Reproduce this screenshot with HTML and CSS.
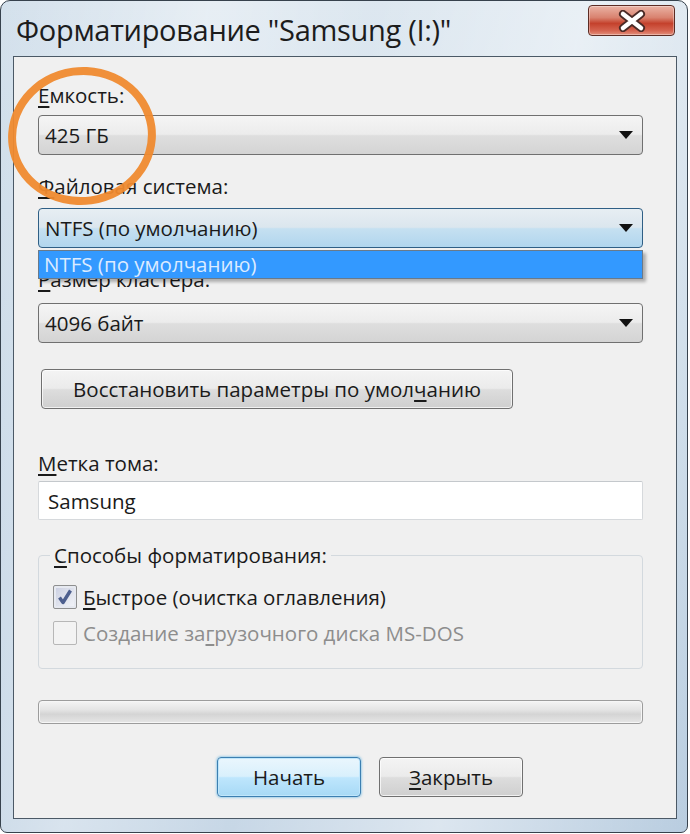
FILE: index.html
```html
<!DOCTYPE html>
<html lang="ru">
<head>
<meta charset="utf-8">
<title>Форматирование</title>
<link rel="stylesheet" href="styles.css">
</head>
<body>
<div class="window">
  <div class="titlebar">
    <div class="title">Форматирование "Samsung (I:)"</div>
    <div class="close">
      <svg width="32" height="22" viewBox="0 0 32 22">
        <path d="M7 4 L25 18 M25 4 L7 18" stroke="#4a2a26" stroke-width="8" stroke-linecap="round"/>
        <path d="M7 4 L25 18 M25 4 L7 18" stroke="#ffffff" stroke-width="4.5" stroke-linecap="round"/>
      </svg>
    </div>
  </div>
  <div class="client">
    <div class="label l1"><u>Е</u>мкость:</div>
    <div class="combo c1"><span>425 ГБ</span><i class="arrow"></i></div>

    <div class="label l2"><u>Ф</u>айловая система:</div>
    <div class="combo-wrap c2">
      <div class="combo focused"><span>NTFS (по умолчанию)</span><i class="arrow"></i></div>
      <div class="droplist"><div class="item">NTFS (по умолчанию)</div></div>
    </div>

    <div class="label l3"><u>Р</u>азмер кластера:</div>
    <div class="combo c3"><span>4096 байт</span><i class="arrow"></i></div>

    <div class="btn restore">Восстановить параметры по умол<u>ч</u>анию</div>

    <div class="label l4"><u>М</u>етка тома:</div>
    <div class="textbox">Samsung</div>

    <fieldset class="group">
      <legend><u>С</u>пособы форматирования:</legend>
      <div class="check-row">
        <span class="checkbox checked">
          <svg width="18" height="18" viewBox="0 0 18 18"><path d="M3.5 9.5 L7 14.5 L14.5 2.5" fill="none" stroke="#4d5f8e" stroke-width="3.4" stroke-linejoin="round"/></svg>
        </span>
        <span><u>Б</u>ыстрое (очистка оглавления)</span>
      </div>
      <div class="check-row disabled">
        <span class="checkbox"></span>
        <span>Создание за<u>г</u>рузочного диска MS-DOS</span>
      </div>
    </fieldset>

    <div class="progress"></div>

    <div class="actions">
      <div class="btn default">Начать</div>
      <div class="btn"><u>З</u>акрыть</div>
    </div>
  </div>
  <div class="mark"></div>
</div>
</body>
</html>
```
FILE: styles.css
```css
* { box-sizing: border-box; }
html, body { margin: 0; padding: 0; background: #ffffff; }
body {
  font-family: "Open Sans", "Noto Sans", sans-serif;
  font-size: 20.5px;
  color: #1a1a1a;
}
u { text-decoration: underline; text-underline-offset: 3px; text-decoration-thickness: 2px; }

.window {
  position: relative;
  width: 688px;
  height: 833px;
  border: 1px solid #37424d;
  border-radius: 10px 10px 7px 7px;
  padding: 55px 10px 13px 12px;
  background:
    linear-gradient(100deg, rgba(255,255,255,0) 0%, rgba(255,255,255,0.45) 25%, rgba(255,255,255,0.2) 45%, rgba(255,255,255,0.5) 70%, rgba(255,255,255,0) 100%),
    linear-gradient(180deg, #d4e1ec 0%, #c6d7e6 50%, #b9cde0 100%);
}

.titlebar {
  position: absolute;
  left: 0; right: 0; top: 0;
  height: 55px;
  display: flex;
  align-items: flex-start;
  padding: 0 12px 0 15px;
}
.title {
  font-family: "Open Sans", "Noto Sans", sans-serif;
  font-size: 29px;
  line-height: 40px;
  color: #1c1c1c;
  margin-top: 9px;
  letter-spacing: -0.3px;
}
.close {
  margin-left: auto;
  margin-top: 4px;
  width: 87px;
  height: 31px;
  border: 1px solid #5c2c24;
  border-radius: 4px;
  background: linear-gradient(180deg, #eab3a5 0%, #d9826f 40%, #c4412c 60%, #d56450 85%, #e3907c 100%);
  box-shadow: inset 0 0 0 1px rgba(255,255,255,0.35);
  display: flex;
  align-items: center;
  justify-content: center;
}

.client {
  height: 100%;
  border: 1px solid #4b5966;
  background: #f0f0f0;
  padding: 26px 33px 0 24px;
}

.label { height: 24px; line-height: 24px; }
.l2 { margin-top: 19px; }
.l3 { margin-top: 19px; }
.l4 { margin-top: 42px; }

.combo {
  height: 40px;
  border: 1px solid #707070;
  border-radius: 4px;
  background: linear-gradient(180deg, #f5f5f5 0%, #ececec 48%, #dedede 52%, #d4d4d4 100%);
  display: flex;
  align-items: center;
  padding: 0 9px 0 6px;
}
.combo span { flex: 1; }
.c1 { margin-top: 8px; }
.combo-wrap { position: relative; margin-top: 10px; }
.c3 { margin-top: 12px; }
.combo.focused {
  border-color: #2f5f85;
  background: linear-gradient(180deg, #e7eef3 0%, #dbe6ee 48%, #c5e0f1 52%, #b1d6ee 100%);
}
.arrow {
  width: 0; height: 0;
  border-left: 7px solid transparent;
  border-right: 7px solid transparent;
  border-top: 8px solid #111;
}

.droplist {
  position: absolute;
  left: 0; right: 0;
  top: 42px;
  height: 29px;
  border: 1px solid #6a7a8a;
  background: #3399ff;
  box-shadow: 3px 3px 3px rgba(0,0,0,0.28);
  z-index: 2;
}
.droplist .item {
  color: #dcebff;
  line-height: 27px;
  padding-left: 5px;
}

.btn {
  height: 40px;
  border: 1px solid #707070;
  border-radius: 4px;
  background: linear-gradient(180deg, #f4f4f4 0%, #ebebeb 48%, #dddddd 52%, #cfcfcf 100%);
  box-shadow: inset 0 0 0 1px rgba(255,255,255,0.7);
  display: flex;
  align-items: center;
  justify-content: center;
}
.restore {
  margin-top: 26px;
  margin-left: 3px;
  width: 472px;
}

.textbox {
  margin-top: 6px;
  height: 39px;
  border: 1px solid #d6d9dc;
  border-top-color: #c4c8cc;
  border-radius: 2px;
  background: #ffffff;
  display: flex;
  align-items: center;
  padding-left: 9px;
}

.group {
  margin: 23px 0 0 0;
  padding: 18px 14px 23px 14px;
  border: 1px solid #d3d9de;
  border-radius: 4px;
  min-inline-size: 0;
}
.group legend {
  padding: 0 4px;
  margin-left: -3px;
  line-height: 24px;
}
.check-row {
  display: flex;
  align-items: center;
  gap: 6px;
  height: 24px;
}
.check-row + .check-row { margin-top: 12px; }
.check-row.disabled { color: #8d8d8d; }
.checkbox {
  width: 24px;
  height: 24px;
  border: 1px solid #8e8f8f;
  border-radius: 2px;
  background: linear-gradient(135deg, #dcdfe6 0%, #f2f3f6 50%, #ffffff 100%);
  box-shadow: inset 0 0 0 2px #f5f5f5;
  display: flex;
  align-items: center;
  justify-content: center;
}
.checkbox.checked {
  background: linear-gradient(135deg, #c8cde0 0%, #e3e6ef 60%, #f4f5f9 100%);
  box-shadow: inset 0 0 0 2px #e6e9f0;
}
.check-row.disabled .checkbox {
  border-color: #b7b7b7;
  background: #f3f3f3;
  box-shadow: none;
}

.progress {
  margin-top: 31px;
  height: 24px;
  border: 1px solid #9c9c9c;
  border-radius: 4px;
  background: linear-gradient(180deg, #f4f4f4 0%, #e4e4e4 40%, #d4d4d4 60%, #e6e6e6 100%);
  box-shadow: inset 0 0 0 1px #f6f6f6;
}

.actions {
  margin-top: 33px;
  display: flex;
  gap: 18px;
  padding-left: 179px;
}
.actions .btn { width: 144px; }
.btn.default {
  border-color: #3c7fb1;
  background: linear-gradient(180deg, #eaf6fd 0%, #d9f0fc 48%, #bee6fd 52%, #a7d9f5 100%);
  box-shadow: inset 0 0 0 1px #c0e6fb, 0 0 2px 1px rgba(90,180,230,0.5);
}

.mark {
  position: absolute;
  left: 7px;
  top: 66px;
  width: 148px;
  height: 138px;
  border: 8px solid #ef8a2f;
  border-radius: 50%;
  transform: rotate(-8deg);
  z-index: 3;
  opacity: 0.95;
}
```
